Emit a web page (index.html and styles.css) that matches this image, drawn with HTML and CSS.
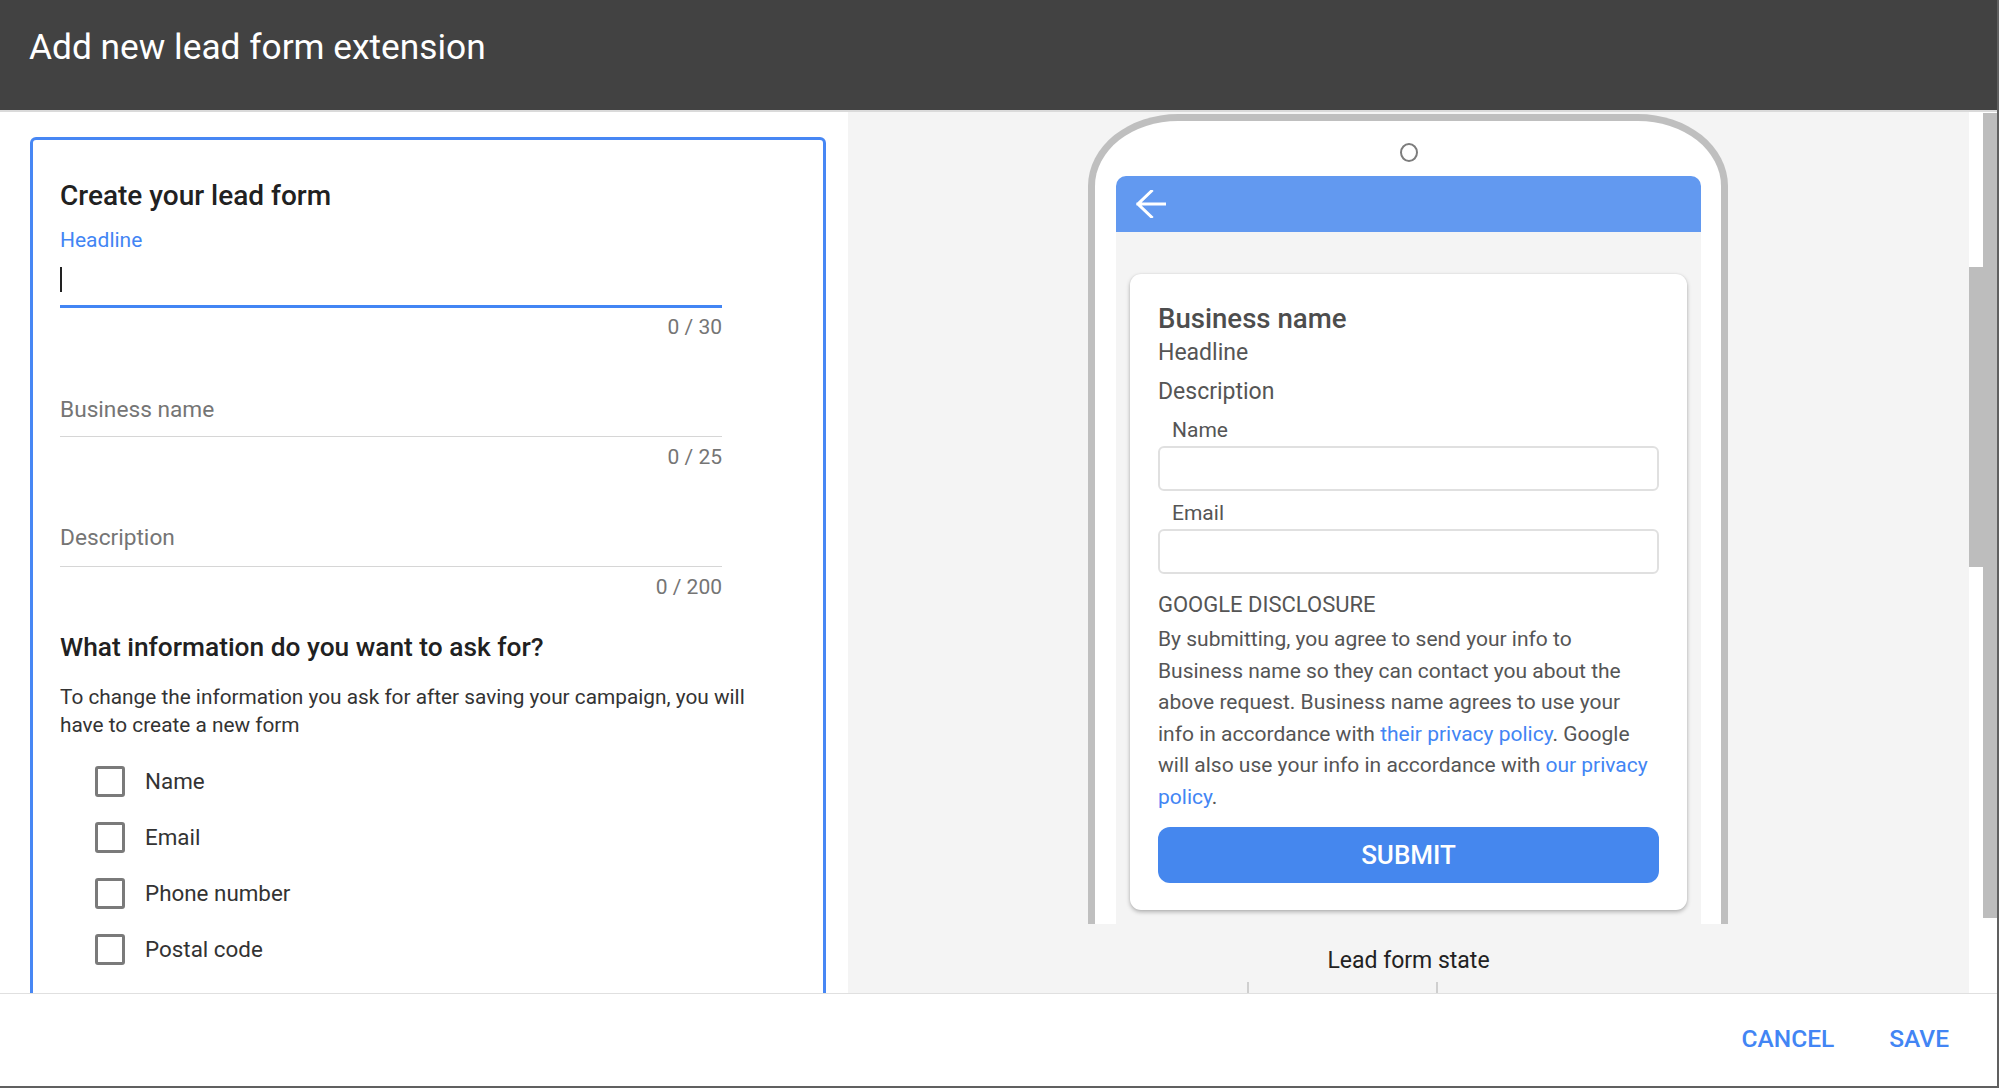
FILE: index.html
```html
<!DOCTYPE html>
<html lang="en">
<head>
<meta charset="utf-8">
<title>Add new lead form extension</title>
<link rel="stylesheet" href="styles.css">
</head>
<body>
<div class="app">
  <header class="topbar">
    <h1 class="title">Add new lead form extension</h1>
  </header>

  <main class="content">
    <section class="left">
      <div class="form-card">
        <h2 class="form-title">Create your lead form</h2>

        <div class="field">
          <div class="field-label">Headline</div>
          <div class="field-line active"><span class="caret"></span></div>
          <div class="counter">0 / 30</div>
        </div>

        <div class="field field-biz">
          <div class="field-line placeholder">Business name</div>
          <div class="counter">0 / 25</div>
        </div>

        <div class="field field-desc">
          <div class="field-line placeholder">Description</div>
          <div class="counter">0 / 200</div>
        </div>

        <h3 class="ask-title">What information do you want to ask for?</h3>
        <p class="ask-text">To change the information you ask for after saving your campaign, you will have to create a new form</p>

        <ul class="checks">
          <li class="check-row"><span class="box"></span><span class="check-label">Name</span></li>
          <li class="check-row"><span class="box"></span><span class="check-label">Email</span></li>
          <li class="check-row"><span class="box"></span><span class="check-label">Phone number</span></li>
          <li class="check-row"><span class="box"></span><span class="check-label">Postal code</span></li>
        </ul>
      </div>
    </section>

    <section class="right">
      <div class="phone">
        <div class="camera"></div>
        <div class="appbar">
          <svg class="back" width="30" height="28" viewBox="0 0 30 28" aria-hidden="true">
            <path d="M2 14 H29 M15.5 1 L2 14 L15.5 27" fill="none" stroke="#fff" stroke-width="3" stroke-linecap="square"/>
          </svg>
        </div>
        <div class="screen">
          <div class="preview-card">
            <div class="pv-name">Business name</div>
            <div class="pv-headline">Headline</div>
            <div class="pv-desc">Description</div>
            <div class="pv-label">Name</div>
            <div class="pv-input"></div>
            <div class="pv-label pv-label-2">Email</div>
            <div class="pv-input"></div>
            <div class="pv-disc-title">GOOGLE DISCLOSURE</div>
            <p class="pv-disc">By submitting, you agree to send your info to<br>Business name so they can contact you about the<br>above request. Business name agrees to use your<br>info in accordance with <a class="link">their privacy policy</a>. Google<br>will also use your info in accordance with <a class="link">our privacy</a><br><a class="link">policy</a>.</p>
            <div class="submit">SUBMIT</div>
          </div>
        </div>
      </div>
      <div class="state">Lead form state</div>
      <div class="ticks"><span class="tick"></span><span class="tick"></span></div>
    </section>

    <div class="scroll-inner"><div class="thumb"></div></div>
    <div class="scroll-outer"><div class="track"></div></div>
  </main>

  <footer class="footer">
    <span class="btn">CANCEL</span>
    <span class="btn">SAVE</span>
  </footer>
</div>
</body>
</html>
```

FILE: styles.css
```css
html, body {
  margin: 0;
  padding: 0;
}
body {
  width: 1999px;
  height: 1088px;
  overflow: hidden;
  font-family: Roboto, "Liberation Sans", Arial, sans-serif;
  background: #fff;
}
.app {
  box-sizing: border-box;
  width: 1999px;
  height: 1088px;
  border-right: 2px solid #606060;
  border-bottom: 2px solid #606060;
  display: flex;
  flex-direction: column;
  overflow: hidden;
}

/* header */
.topbar {
  height: 83px;
  flex: none;
  background: #424242;
  border-bottom: 2px solid #dadada;
  padding: 27px 29px 0;
}
.title {
  margin: 0;
  font-size: 35.3px;
  line-height: 41px;
  font-weight: 400;
  color: #fff;
}

/* main */
.content {
  height: 881px;
  flex: none;
  display: flex;
  overflow: hidden;
}
.left {
  width: 848px;
  flex: none;
  background: #fff;
  padding: 25px 0 0 30px;
  box-sizing: border-box;
  overflow: hidden;
}
.form-card {
  box-sizing: border-box;
  width: 796px;
  height: 1000px;
  border: 3px solid #4787f4;
  border-radius: 6px;
  padding: 39px 27px 0;
}
.form-title {
  margin: 0;
  font-size: 28px;
  line-height: 33px;
  font-weight: 500;
  color: #212121;
}
.field { width: 662px; }
.field-label {
  margin-top: 16px;
  font-size: 21px;
  line-height: 24px;
  color: #4285f4;
}
.field-line.active {
  height: 38px;
  padding-top: 15px;
  border-bottom: 3px solid #4285f4;
}
.caret {
  display: block;
  width: 2px;
  height: 25px;
  background: #222;
}
.counter {
  margin-top: 7px;
  text-align: right;
  font-size: 21px;
  line-height: 24px;
  color: #757575;
}
.field-line.placeholder {
  font-size: 22.7px;
  line-height: 26px;
  color: #757575;
  border-bottom: 1px solid #d6d6d6;
}
.field-biz { margin-top: 58px; }
.field-biz .placeholder { padding-bottom: 13px; }
.field-desc { margin-top: 56px; }
.field-desc .placeholder { padding-bottom: 15px; }
.field-biz .counter, .field-desc .counter { margin-top: 8px; }

.ask-title {
  margin: 33px 0 0;
  font-size: 26.3px;
  line-height: 31px;
  font-weight: 500;
  color: #212121;
}
.ask-text {
  margin: 20px 0 0;
  max-width: 716px;
  font-size: 20.8px;
  line-height: 28px;
  color: #333;
}
.checks {
  list-style: none;
  margin: 14px 0 0;
  padding: 0 0 0 35px;
}
.check-row {
  height: 56px;
  display: flex;
  align-items: center;
  gap: 20px;
}
.box {
  box-sizing: border-box;
  width: 30px;
  height: 31px;
  border: 3px solid #7a7a7a;
  border-radius: 3px;
  flex: none;
}
.check-label {
  font-size: 22.4px;
  line-height: 26px;
  color: #333;
}

/* right preview */
.right {
  width: 1121px;
  flex: none;
  background: #f4f4f4;
  padding-top: 2px;
  box-sizing: border-box;
  display: flex;
  flex-direction: column;
}
.phone {
  box-sizing: border-box;
  margin-left: 240px;
  width: 640px;
  height: 810px;
  flex: none;
  background: #fff;
  border: 7px solid #bfbfbf;
  border-bottom: 0;
  border-radius: 90px 90px 0 0 / 72px 72px 0 0;
  padding: 22px 20px 0 21px;
  display: flex;
  flex-direction: column;
  overflow: hidden;
}
.camera {
  box-sizing: border-box;
  width: 18px;
  height: 19px;
  border: 2px solid #7d7d7d;
  border-radius: 50%;
  align-self: center;
  flex: none;
}
.appbar {
  margin-top: 14px;
  height: 56px;
  flex: none;
  background: #6299f0;
  border-radius: 10px 10px 0 0;
  display: flex;
  align-items: center;
  padding-left: 20px;
}
.back { display: block; }
.screen {
  flex: 1;
  background: #f4f4f4;
  padding: 42px 14px 0;
}
.preview-card {
  background: #fff;
  border-radius: 11px;
  box-shadow: 0 2px 4px rgba(0,0,0,0.28), 0 0 2px rgba(0,0,0,0.08);
  padding: 29px 28px 27px;
  color: #555;
}
.pv-name {
  font-size: 27.6px;
  line-height: 32px;
  font-weight: 500;
  color: #4d4d4d;
}
.pv-headline {
  margin-top: 4px;
  font-size: 23px;
  line-height: 28px;
}
.pv-desc {
  margin-top: 11px;
  font-size: 23px;
  line-height: 28px;
}
.pv-label {
  margin-top: 12px;
  padding-left: 14px;
  font-size: 21px;
  line-height: 24px;
}
.pv-label-2 { margin-top: 10px; }
.pv-input {
  box-sizing: border-box;
  margin-top: 4px;
  height: 45px;
  border: 2px solid #e0e0e0;
  border-radius: 6px;
}
.pv-disc-title {
  margin-top: 18px;
  font-size: 22px;
  line-height: 26px;
}
.pv-disc {
  margin: 6px 0 0;
  font-size: 21px;
  line-height: 31.6px;
  white-space: nowrap;
}
.link { color: #4285f4; }
.submit {
  margin-top: 13px;
  height: 56px;
  border-radius: 12px;
  background: #4587ee;
  color: #fff;
  font-size: 26px;
  font-weight: 500;
  display: flex;
  align-items: center;
  justify-content: center;
}
.state {
  margin-top: 24px;
  text-align: center;
  font-size: 23px;
  line-height: 26px;
  color: #222;
}
.ticks {
  margin: 8px 0 0 399px;
  display: flex;
  gap: 187px;
}
.tick {
  width: 2px;
  height: 14px;
  background: #cfcfcf;
}

/* scrollbars */
.scroll-inner {
  width: 14px;
  flex: none;
  background: #fff;
}
.thumb {
  margin-top: 155px;
  height: 300px;
  background: #bdbdbd;
}
.scroll-outer {
  width: 14px;
  flex: none;
  background: #fff;
}
.track {
  margin-top: 1px;
  height: 805px;
  background: #bdbdbd;
}

/* footer */
.footer {
  flex: 1;
  border-top: 1px solid #e0e0e0;
  background: #fff;
  display: flex;
  justify-content: flex-end;
  align-items: flex-start;
  gap: 55px;
  padding: 30px 48px 0 0;
}
.btn {
  font-size: 24.5px;
  line-height: 29px;
  font-weight: 500;
  color: #4285f4;
}
```
